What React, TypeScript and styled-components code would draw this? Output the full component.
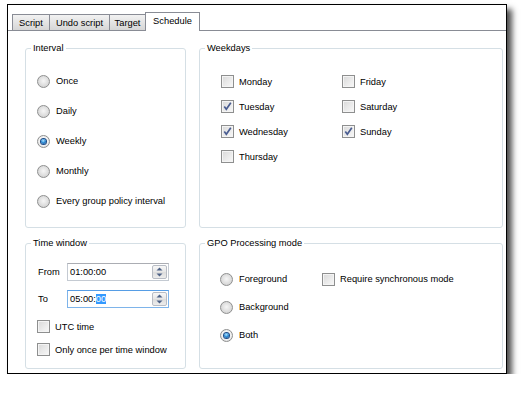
import styled, { createGlobalStyle, css } from "styled-components";

const GlobalStyle = createGlobalStyle`
    html, body {
        margin: 0;
        padding: 0;
        background: #fff;
    }
    body {
        font-family: "Liberation Sans", Arial, sans-serif;
        font-size: 9.3px;
        color: #000;
    }
`

const Window = styled.div`
    box-sizing: border-box;
    margin: 4px 0 0 7px;
    width: 500px;
    height: 370px;
    border: 1px solid #000;
    background: #fff;
    box-shadow: 5px 5px 6px rgba(0, 0, 0, 0.7);
    display: flex;
    flex-direction: column;
`

const TabStrip = styled.div`
    box-sizing: border-box;
    height: 26px;
    padding-left: 4px;
    border-bottom: 1px solid #898c95;
    display: flex;
    align-items: flex-end;
`

const Tab = styled.div<{ $width: number; $active?: boolean }>`
    box-sizing: border-box;
    width: ${p => p.$width}px;
    height: 16px;
    margin-left: -1px;
    border: 1px solid #898c95;
    border-bottom: none;
    background: linear-gradient(#f2f2f2, #e4e4e4 50%, #d6d6d6);
    display: flex;
    justify-content: center;
    align-items: center;
    padding-top: 1px;
    white-space: nowrap;
    &:first-child {
        margin-left: 0;
    }
    ${p => p.$active && css`
        height: 19px;
        margin-bottom: -1px;
        background: #fff;
        position: relative;
        z-index: 1;
        align-items: flex-start;
        padding-top: 3px;
    `}
`

const TabPanel = styled.div`
    flex: 1;
    padding: 17px 3px 4px 17px;
    display: grid;
    grid-template-columns: 161px 304px;
    grid-template-rows: 180px 126px;
    column-gap: 13px;
    row-gap: 15px;
`

const GroupBox = styled.div`
    box-sizing: border-box;
    position: relative;
    border: 1px solid #d5dfe5;
    border-radius: 3px;
`

const GroupTitle = styled.span`
    position: absolute;
    top: -7px;
    left: 5px;
    padding: 0 2px;
    line-height: 13px;
    background: #fff;
`

const IntervalList = styled.div`
    padding: 17px 0 0 11px;
    display: flex;
    flex-direction: column;
`

const Option = styled.label<{ $height: number }>`
    height: ${p => p.$height}px;
    display: flex;
    align-items: center;
    gap: 6px;
    white-space: nowrap;
`

const Radio = styled.span<{ $checked?: boolean }>`
    box-sizing: border-box;
    position: relative;
    flex: none;
    width: 13px;
    height: 13px;
    border-radius: 50%;
    border: 1px solid #8e8f8f;
    background: radial-gradient(circle at 50% 45%, #f6f6f6 0%, #e2e2e2 45%, #c9c9c9 100%);
    ${p => p.$checked && css`
        background: radial-gradient(circle at 50% 45%, #ffffff 0%, #f0f0f0 55%, #cfcfcf 100%);
        &::after {
            content: "";
            position: absolute;
            left: 3px;
            top: 3px;
            width: 5px;
            height: 5px;
            border-radius: 50%;
            background: radial-gradient(circle at 45% 35%, #b6e6ff 0%, #2f8fd8 45%, #0c3b80 100%);
            box-shadow: 0 0 0 1px #1d4a86;
        }
    `}
`

const CheckBoxBox = styled.span`
    box-sizing: border-box;
    flex: none;
    width: 13px;
    height: 13px;
    border: 1px solid #8e8f8f;
    box-shadow: inset 0 0 0 1px #f4f4f4;
    background: linear-gradient(135deg, #d8d8d8 0%, #e9e9e9 50%, #f8f8f8 100%);
    display: flex;
    align-items: center;
    justify-content: center;
`

const CheckBox: React.FC<{ checked?: boolean }> = ({ checked }) => (
    <CheckBoxBox>
        {checked && (
            <svg width="11" height="11" viewBox="0 0 11 11">
                <path d="M2.3 5.6 L4.3 8.2 L8.8 1.8" fill="none" stroke="#4a5d91" strokeWidth="1.7"/>
            </svg>
        )}
    </CheckBoxBox>
)

const WeekdayGrid = styled.div`
    padding: 20px 0 0 21px;
    display: grid;
    grid-template-columns: 121px auto;
    grid-template-rows: repeat(4, 25px);
    grid-auto-flow: column;
    justify-content: start;
`

const CheckOption = styled.label<{ $height: number }>`
    height: ${p => p.$height}px;
    display: flex;
    align-items: center;
    gap: 5px;
    white-space: nowrap;
`

const TimeBody = styled.div`
    padding: 19px 0 0 11px;
    display: flex;
    flex-direction: column;
`

const TimeGrid = styled.div`
    display: grid;
    grid-template-columns: 30px 102px;
    grid-template-rows: 18px 18px;
    row-gap: 9px;
    align-items: center;
    margin-bottom: 7px;
`

const TimeLabel = styled.span`
    padding-left: 1px;
`

const TimeInput = styled.div<{ $focused?: boolean }>`
    box-sizing: border-box;
    height: 18px;
    border: 1px solid #c4cad2;
    border-top-color: #abadb3;
    background: #fff;
    display: flex;
    align-items: center;
    padding-left: 2px;
    padding-right: 1px;
    ${p => p.$focused && css`
        border-color: #7eb4ea;
        border-top-color: #569de5;
    `}
`

const TimeText = styled.span`
    flex: 1;
    line-height: 13px;
`

const Selection = styled.span`
    background: #3399ff;
    color: #fff;
`

const Spinner = styled.div`
    box-sizing: border-box;
    width: 15px;
    height: 14px;
    border: 1px solid #b8bcc4;
    border-radius: 2px;
    background: linear-gradient(#f7f7f7, #e6e6e6 50%, #dcdcdc 50%, #ececec);
    display: flex;
    flex-direction: column;
    align-items: center;
    justify-content: space-around;
`

const SpinArrows = () => (
    <Spinner>
        <svg width="7" height="4" viewBox="0 0 7 4"><path d="M0.5 3.5 L3.5 0.5 L6.5 3.5 Z" fill="#4d6185"/></svg>
        <svg width="7" height="4" viewBox="0 0 7 4"><path d="M0.5 0.5 L3.5 3.5 L6.5 0.5 Z" fill="#4d6185"/></svg>
    </Spinner>
)

const GpoGrid = styled.div`
    padding: 21px 0 0 20px;
    display: grid;
    grid-template-columns: 102px auto;
    grid-template-rows: repeat(3, 28px);
    justify-content: start;
`

const intervals = ["Once", "Daily", "Weekly", "Monthly", "Every group policy interval"]
const weekdays: [string, boolean][] = [
    ["Monday", false], ["Tuesday", true], ["Wednesday", true], ["Thursday", false],
    ["Friday", false], ["Saturday", false], ["Sunday", true],
]

const App = () => (<>
    <GlobalStyle/>
    <Window>
        <TabStrip>
            <Tab $width={38}>Script</Tab>
            <Tab $width={61}>Undo script</Tab>
            <Tab $width={37}>Target</Tab>
            <Tab $width={55} $active>Schedule</Tab>
        </TabStrip>
        <TabPanel>
            <GroupBox>
                <GroupTitle>Interval</GroupTitle>
                <IntervalList>
                    {intervals.map(i => (
                        <Option $height={30} key={i}>
                            <Radio $checked={i === "Weekly"}/>{i}
                        </Option>
                    ))}
                </IntervalList>
            </GroupBox>
            <GroupBox>
                <GroupTitle>Weekdays</GroupTitle>
                <WeekdayGrid>
                    {weekdays.map(([d, on]) => (
                        <CheckOption $height={25} key={d}>
                            <CheckBox checked={on}/>{d}
                        </CheckOption>
                    ))}
                </WeekdayGrid>
            </GroupBox>
            <GroupBox>
                <GroupTitle>Time window</GroupTitle>
                <TimeBody>
                    <TimeGrid>
                        <TimeLabel>From</TimeLabel>
                        <TimeInput>
                            <TimeText>01:00:00</TimeText>
                            <SpinArrows/>
                        </TimeInput>
                        <TimeLabel>To</TimeLabel>
                        <TimeInput $focused>
                            <TimeText>05:00:<Selection>00</Selection></TimeText>
                            <SpinArrows/>
                        </TimeInput>
                    </TimeGrid>
                    <CheckOption $height={23}><CheckBox/>UTC time</CheckOption>
                    <CheckOption $height={23}><CheckBox/>Only once per time window</CheckOption>
                </TimeBody>
            </GroupBox>
            <GroupBox>
                <GroupTitle>GPO Processing mode</GroupTitle>
                <GpoGrid>
                    <Option $height={28}><Radio/>Foreground</Option>
                    <CheckOption $height={28}><CheckBox/>Require synchronous mode</CheckOption>
                    <Option $height={28}><Radio/>Background</Option>
                    <span/>
                    <Option $height={28}><Radio $checked/>Both</Option>
                </GpoGrid>
            </GroupBox>
        </TabPanel>
    </Window>
</>)

export default App
